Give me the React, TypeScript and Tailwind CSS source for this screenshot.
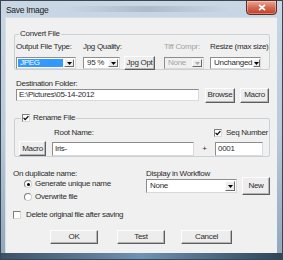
import React from "react";

const FONT = "font-['Liberation_Sans',Arial,sans-serif] text-[8px] leading-[10px] tracking-[-0.3px] text-[#2c2c2c]";

function Btn({ cls, children }: { cls: string; children: React.ReactNode }) {
  return (
    <div
      className={`flex items-center justify-center whitespace-nowrap bg-[#ededed] border border-t-[#fdfdfd] border-l-[#fdfdfd] border-r-[#5e5e5e] border-b-[#5e5e5e] shadow-[inset_-1px_-1px_0_#b4b4b4] ${cls}`}
    >
      {children}
    </div>
  );
}

function Arrow({ disabled }: { disabled?: boolean }) {
  return (
    <div className="w-[10px] self-stretch my-[1px] mr-[1px] flex items-center justify-center bg-[#ededed] border border-t-[#fdfdfd] border-l-[#fdfdfd] border-r-[#6a6a6a] border-b-[#6a6a6a]">
      <svg width="5" height="3" viewBox="0 0 5 3">
        <path d="M0 0 H5 L2.5 3 Z" fill={disabled ? "#a8a8a8" : "#000"} />
      </svg>
    </div>
  );
}

function Select({
  cls,
  text,
  highlight,
  disabled,
}: {
  cls: string;
  text: string;
  highlight?: boolean;
  disabled?: boolean;
}) {
  return (
    <div
      className={`flex items-stretch border border-t-[#8d8d8d] border-l-[#8d8d8d] border-r-[#d9d9d9] border-b-[#d9d9d9] ${
        disabled ? "bg-[#f0f0f0]" : "bg-white"
      } ${cls}`}
    >
      <div className="flex-1 flex items-center p-[1px]">
        <div
          className={`h-full w-full flex items-center pl-[2px] ${
            highlight ? "bg-[#3399ff] text-white" : disabled ? "text-[#a3a3a3]" : ""
          }`}
        >
          {text}
        </div>
      </div>
      <Arrow disabled={disabled} />
    </div>
  );
}

function Input({ cls, text }: { cls: string; text: string }) {
  return (
    <div
      className={`flex items-center pl-[2px] bg-white border border-t-[#8d8d8d] border-l-[#8d8d8d] border-r-[#dadada] border-b-[#dadada] whitespace-nowrap ${cls}`}
    >
      {text}
    </div>
  );
}

function Check({ checked }: { checked?: boolean }) {
  return (
    <div className="w-[8px] h-[8px] bg-white border border-t-[#7e7e7e] border-l-[#7e7e7e] border-r-[#d8d8d8] border-b-[#d8d8d8] flex items-center justify-center shrink-0">
      {checked && (
        <svg width="6" height="6" viewBox="0 0 6 6">
          <path d="M0.6 2.9 L2.2 4.6 L5.4 1.1" stroke="#000" strokeWidth="1.3" fill="none" />
        </svg>
      )}
    </div>
  );
}

function Radio({ checked }: { checked?: boolean }) {
  return (
    <div className="w-[8px] h-[8px] rounded-full bg-white border border-t-[#7e7e7e] border-l-[#7e7e7e] border-r-[#d0d0d0] border-b-[#d0d0d0] flex items-center justify-center shrink-0">
      {checked && <div className="w-[3px] h-[3px] rounded-full bg-black" />}
    </div>
  );
}

export default function App() {
  return (
    <div
      className={`w-[283px] h-[260px] flex flex-col border border-[#3b4653] bg-gradient-to-b from-[#c9d7e5] via-[#b9cadb] to-[#8fa6bd] ${FONT}`}
    >
      {/* Title bar */}
      <div className="h-[16px] flex items-start shrink-0">
        <div className="pl-[5px] pt-[4px] text-[8.5px] leading-[10px] text-[#1a1a1a]">Save Image</div>
        <div className="flex-1 mx-[16px] mt-[5px] h-[6px] bg-gradient-to-r from-transparent via-[#9aa9b8] to-transparent opacity-60" />
        <div className="-mt-[1px] mr-[5px] w-[31px] h-[15px] rounded-b-[4px] border border-[#5b2c22] bg-gradient-to-b from-[#e9a896] via-[#d36a52] to-[#c23a22] flex items-center justify-center shadow-[inset_0_0_0_1px_rgba(255,255,255,0.35)]">
          <svg width="8" height="7" viewBox="0 0 8 7">
            <path d="M1 0.8 L7 6.2 M7 0.8 L1 6.2" stroke="#fff" strokeWidth="1.8" />
          </svg>
        </div>
      </div>

      {/* Client area */}
      <div className="ml-[4px] w-[272px] h-[236px] bg-[#f0f0f0] flex flex-col shrink-0 border-l border-t border-[#d6dee6]">
        {/* Convert File */}
        <fieldset className="mt-[11px] ml-[8px] w-[256px] border border-[#c9d0d6] rounded-[2px]">
          <legend className="ml-[4px] px-[1px] leading-[10px]">Convert File</legend>
          <div className="flex pt-[3px] pl-[1px]">
            <div className="w-[60px] flex flex-col">
              <div className="whitespace-nowrap">Output File Type:</div>
              <Select cls="mt-[5px] w-[60px] h-[12px]" text="JPEG" highlight />
            </div>
            <div className="ml-[7px] flex flex-col">
              <div className="whitespace-nowrap">Jpg Quality:</div>
              <div className="mt-[5px] h-[12px] flex items-center gap-[4px]">
                <Select cls="w-[37px] h-[12px]" text="95 %" />
                <Btn cls="w-[31px] h-[14px]">Jpg Opt</Btn>
              </div>
            </div>
            <div className="ml-[9px] w-[40px] flex flex-col">
              <div className="whitespace-nowrap text-[#a3a3a3]">Tiff Compr:</div>
              <Select cls="mt-[5px] w-[40px] h-[12px]" text="None" disabled />
            </div>
            <div className="ml-[6px] w-[51px] flex flex-col">
              <div className="whitespace-nowrap">Resize (max size)</div>
              <Select cls="mt-[5px] w-[51px] h-[12px]" text="Unchanged" />
            </div>
          </div>
        </fieldset>

        {/* Destination folder */}
        <div className="mt-[9px] ml-[10px]">Destination Folder:</div>
        <div className="ml-[10px] h-[12px] flex items-center">
          <Input cls="w-[183px] h-[12px]" text="E:\Pictures\05-14-2012" />
          <Btn cls="ml-[6px] w-[30px] h-[15px]">Browse</Btn>
          <Btn cls="ml-[5px] w-[29px] h-[15px]">Macro</Btn>
        </div>

        {/* Rename File */}
        <fieldset className="mt-[12px] ml-[8px] w-[256px] border border-[#c9d0d6] rounded-[2px]">
          <legend className="ml-[6px] px-[1px] leading-[10px]">
            <span className="flex items-center gap-[3px]">
              <Check checked />
              <span>Rename File</span>
            </span>
          </legend>
          <div className="flex pt-[5px]">
            <div className="ml-[4px] w-[27px]" />
            <div className="ml-[6px] w-[142px] pl-[2px]">Root Name:</div>
            <div className="w-[20px]" />
            <div className="flex items-center gap-[4px] -mt-[1px]">
              <Check checked />
              <span className="whitespace-nowrap">Seq Number</span>
            </div>
          </div>
          <div className="flex items-center mt-[3px] h-[15px]">
            <Btn cls="ml-[4px] w-[27px] h-[15px]">Macro</Btn>
            <Input cls="ml-[6px] w-[142px] h-[14px]" text="Iris-" />
            <div className="w-[21px] text-center">+</div>
            <Input cls="w-[48px] h-[14px]" text="0001" />
          </div>
        </fieldset>

        {/* Duplicates + workflow */}
        <div className="mt-[12px] flex">
          <div className="ml-[7px] w-[133px] flex flex-col">
            <div>On duplicate name:</div>
            <div className="ml-[11px] flex items-center gap-[3px] h-[10px]">
              <Radio checked />
              <span>Generate unique name</span>
            </div>
            <div className="ml-[11px] mt-[3px] flex items-center gap-[3px] h-[10px]">
              <Radio />
              <span>Overwrite file</span>
            </div>
          </div>
          <div className="flex flex-col">
            <div>Display in Workflow</div>
            <div className="h-[14px] flex items-center">
              <Select cls="w-[91px] h-[14px]" text="None" />
              <Btn cls="ml-[5px] w-[28px] h-[18px]">New</Btn>
            </div>
          </div>
        </div>

        {/* Delete */}
        <div className="mt-[8px] ml-[7px] h-[10px] flex items-center gap-[5px]">
          <Check />
          <span>Delete original file after saving</span>
        </div>

        {/* Buttons */}
        <div className="mt-[10px] ml-[44px] flex">
          <Btn cls="w-[48px] h-[14px]">OK</Btn>
          <Btn cls="ml-[19px] w-[48px] h-[14px]">Test</Btn>
          <Btn cls="ml-[16px] w-[51px] h-[14px]">Cancel</Btn>
        </div>
      </div>

      {/* bottom frame */}
      <div className="flex-1 bg-gradient-to-r from-[#3d5166] via-[#6f93b4] to-[#2f4458]" />
    </div>
  );
}
